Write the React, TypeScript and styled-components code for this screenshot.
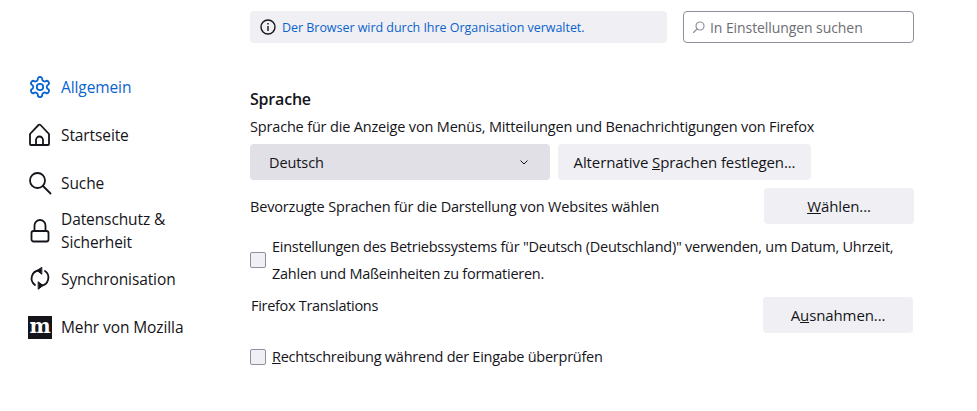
import React from 'react';
import styled, { createGlobalStyle } from 'styled-components';

const GlobalStyle = createGlobalStyle`
  html, body {
    margin: 0;
    padding: 0;
    background: #fff;
  }
  body {
    font-family: 'Open Sans', 'Noto Sans', sans-serif;
    font-size: 14px;
    color: #15141a;
  }
`;

const Page = styled.div`
  width: 977px;
  height: 411px;
  overflow: hidden;
  display: flex;
`;

const Sidebar = styled.nav`
  width: 250px;
  flex: none;
  padding: 63px 0 0 28px;
  box-sizing: border-box;
`;

const NavItem = styled.div<{ $active?: boolean }>`
  height: 48px;
  display: flex;
  align-items: center;
  gap: 9px;
  color: ${(p) => (p.$active ? '#0b63ce' : '#15141a')};
  font-size: 15.5px;
  letter-spacing: -0.1px;
  line-height: 23px;
`;

const NavIcon = styled.svg`
  width: 24px;
  height: 24px;
  flex: none;
  fill: none;
  stroke: currentColor;
  stroke-width: 1.8;
  stroke-linecap: round;
  stroke-linejoin: round;
`;

const MozillaLogo = styled.span`
  width: 24px;
  height: 23px;
  flex: none;
  background: #15141a;
  color: #fff;
  font-family: 'DejaVu Serif', serif;
  font-weight: 700;
  font-size: 20px;
  line-height: 21px;
  letter-spacing: 0;
  text-align: center;
`;

const Main = styled.main`
  width: 664px;
  flex: none;
  padding-top: 11px;
  display: flex;
  flex-direction: column;
`;

const TopBar = styled.div`
  display: flex;
  gap: 16px;
  margin-bottom: 44px;
`;

const Notice = styled.div`
  width: 417px;
  height: 32px;
  background: #f0f0f4;
  border-radius: 4px;
  display: flex;
  align-items: center;
  gap: 6px;
  padding-left: 10px;
  box-sizing: border-box;
  color: #0b63ce;
  font-size: 12.5px;
  letter-spacing: -0.04px;
`;

const InfoIcon = styled.svg`
  width: 16px;
  height: 16px;
  flex: none;
  fill: none;
  stroke: #15141a;
  stroke-width: 1.4;
`;

const SearchBox = styled.div`
  width: 231px;
  height: 32px;
  box-sizing: border-box;
  border: 1px solid #8f8f9d;
  border-radius: 4px;
  display: flex;
  align-items: center;
  gap: 5px;
  padding-left: 9px;
  color: #6d6d75;
  font-size: 14px;
  letter-spacing: -0.08px;
`;

const SearchIcon = styled.svg`
  width: 12px;
  height: 12px;
  flex: none;
  fill: none;
  stroke: #8f8f9d;
  stroke-width: 1.2;
  stroke-linecap: round;
`;

const Heading = styled.h2`
  margin: 0;
  height: 24px;
  font-size: 16px;
  font-weight: 600;
  line-height: 24px;
  letter-spacing: -0.2px;
`;

const Text = styled.div`
  font-size: 14.5px;
  letter-spacing: -0.17px;
  line-height: 27px;
`;

const Description = styled(Text)`
  height: 30px;
  line-height: 32px;
`;

const CheckText = styled(Text)`
  letter-spacing: -0.25px;
`;

const Row = styled.div`
  display: flex;
  align-items: center;
  justify-content: space-between;
  height: 36px;
`;

const LanguageRow = styled(Row)`
  justify-content: flex-start;
  gap: 8px;
  margin: 3px 0 8px;
`;

const Select = styled.div`
  width: 300px;
  height: 36px;
  box-sizing: border-box;
  background: #e0e0e6;
  border-radius: 4px;
  padding: 0 22px 0 19px;
  display: flex;
  align-items: center;
  justify-content: space-between;
  font-size: 14.5px;
  letter-spacing: -0.1px;
`;

const Chevron = styled.svg`
  width: 8px;
  height: 5px;
  fill: none;
  stroke: #15141a;
  stroke-width: 1;
`;

const Button = styled.button<{ $width: number }>`
  width: ${(p) => p.$width}px;
  height: 36px;
  border: 0;
  border-radius: 4px;
  background: #f0f0f4;
  color: #15141a;
  font-family: inherit;
  font-size: 15px;
  font-weight: 500;
  letter-spacing: -0.1px;
  padding: 0;
`;

const CheckRow = styled.div<{ $top: number }>`
  display: flex;
  align-items: center;
  gap: 6px;
  margin-top: ${(p) => p.$top}px;
`;

const CheckBox = styled.span`
  width: 16px;
  height: 16px;
  flex: none;
  box-sizing: border-box;
  border: 1px solid #8f8f9d;
  border-radius: 2px;
  background: #f0f0f4;
`;

const TranslationRow = styled(Row)`
  margin: 10px 1px 0 1px;
  align-items: flex-start;
`;

const TranslationLabel = styled(Text)`
  line-height: 18px;
  letter-spacing: -0.3px;
`;

const Access = styled.span`
  text-decoration: underline;
`;

export default function App() {
  return (
    <>
      <GlobalStyle />
      <Page>
        <Sidebar>
          <NavItem $active>
            <NavIcon viewBox="0 0 24 24">
              <path d="M12.2 2h-.4a2 2 0 0 0-2 2v.2a2 2 0 0 1-1 1.7l-.4.3a2 2 0 0 1-2 0l-.2-.1a2 2 0 0 0-2.7.7l-.2.4a2 2 0 0 0 .7 2.7l.2.1a2 2 0 0 1 1 1.7v.6a2 2 0 0 1-1 1.7l-.2.1a2 2 0 0 0-.7 2.7l.2.4a2 2 0 0 0 2.7.7l.2-.1a2 2 0 0 1 2 0l.4.3a2 2 0 0 1 1 1.7v.2a2 2 0 0 0 2 2h.4a2 2 0 0 0 2-2v-.2a2 2 0 0 1 1-1.7l.4-.3a2 2 0 0 1 2 0l.2.1a2 2 0 0 0 2.7-.7l.2-.4a2 2 0 0 0-.7-2.7l-.2-.1a2 2 0 0 1-1-1.7v-.6a2 2 0 0 1 1-1.7l.2-.1a2 2 0 0 0 .7-2.7l-.2-.4a2 2 0 0 0-2.7-.7l-.2.1a2 2 0 0 1-2 0l-.4-.3a2 2 0 0 1-1-1.7V4a2 2 0 0 0-2-2z" />
              <circle cx="12" cy="12" r="3.2" />
            </NavIcon>
            Allgemein
          </NavItem>
          <NavItem>
            <NavIcon viewBox="0 0 24 24">
              <path d="M3 22h17a1 1 0 0 0 1-1V11L12.500 2a1.400 1.400 0 0 0-2 0L2 11v10a1 1 0 0 0 1 1z" />
              <path d="M8 22v-5a3.500 3.500 0 0 1 7 0v5" />
            </NavIcon>
            Startseite
          </NavItem>
          <NavItem>
            <NavIcon viewBox="0 0 24 24">
              <circle cx="9.500" cy="9.500" r="7.500" />
              <path d="M15 15l7.500 7.500" />
            </NavIcon>
            Suche
          </NavItem>
          <NavItem>
            <NavIcon viewBox="0 0 24 24">
              <rect x="3.500" y="12" width="17" height="10.500" rx="2" />
              <path d="M6.500 12V6.500a5.500 5.500 0 0 1 11 0V12" />
            </NavIcon>
            <span>
              Datenschutz &amp;
              <br />
              Sicherheit
            </span>
          </NavItem>
          <NavItem>
            <NavIcon viewBox="0 0 24 24">
              <path d="M11 3.500a8 8 0 0 0-4 14.500" />
              <path d="M13 18.500a8 8 0 0 0 4-14.500" />
              <path d="M13.500 0.500L9 3.500l4.500 3.500z" fill="currentColor" strokeWidth="1" />
              <path d="M10.500 22l4.500-3.500-4.500-3.500z" fill="currentColor" strokeWidth="1" />
            </NavIcon>
            Synchronisation
          </NavItem>
          <NavItem>
            <MozillaLogo>m</MozillaLogo>
            Mehr von Mozilla
          </NavItem>
        </Sidebar>
        <Main>
          <TopBar>
            <Notice>
              <InfoIcon viewBox="0 0 16 16">
                <circle cx="8" cy="8" r="7" />
                <path d="M8 7v5M8 4v1.600" />
              </InfoIcon>
              Der Browser wird durch Ihre Organisation verwaltet.
            </Notice>
            <SearchBox>
              <SearchIcon viewBox="0 0 12 12">
                <circle cx="7" cy="5" r="4" />
                <path d="M4 8l-3.500 3.500" />
              </SearchIcon>
              In Einstellungen suchen
            </SearchBox>
          </TopBar>
          <Heading>Sprache</Heading>
          <Description>Sprache für die Anzeige von Menüs, Mitteilungen und Benachrichtigungen von Firefox</Description>
          <LanguageRow>
            <Select>
              Deutsch
              <Chevron viewBox="0 0 8 5">
                <path d="M.5.500L4 4 7.500.500" />
              </Chevron>
            </Select>
            <Button $width={253}>
              Alternative <Access>S</Access>prachen festlegen...
            </Button>
          </LanguageRow>
          <Row>
            <Text>Bevorzugte Sprachen für die Darstellung von Websites wählen</Text>
            <Button $width={150}>
              <Access>W</Access>ählen...
            </Button>
          </Row>
          <CheckRow $top={9}>
            <CheckBox />
            <CheckText>
              Einstellungen des Betriebssystems für "Deutsch (Deutschland)" verwenden, um Datum, Uhrzeit,
              <br />
              Zahlen und Maßeinheiten zu formatieren.
            </CheckText>
          </CheckRow>
          <TranslationRow>
            <TranslationLabel>Firefox Translations</TranslationLabel>
            <Button $width={150}>
              A<Access>u</Access>snahmen...
            </Button>
          </TranslationRow>
          <CheckRow $top={10}>
            <CheckBox />
            <CheckText>
              <Access>R</Access>echtschreibung während der Eingabe überprüfen
            </CheckText>
          </CheckRow>
        </Main>
      </Page>
    </>
  );
}
